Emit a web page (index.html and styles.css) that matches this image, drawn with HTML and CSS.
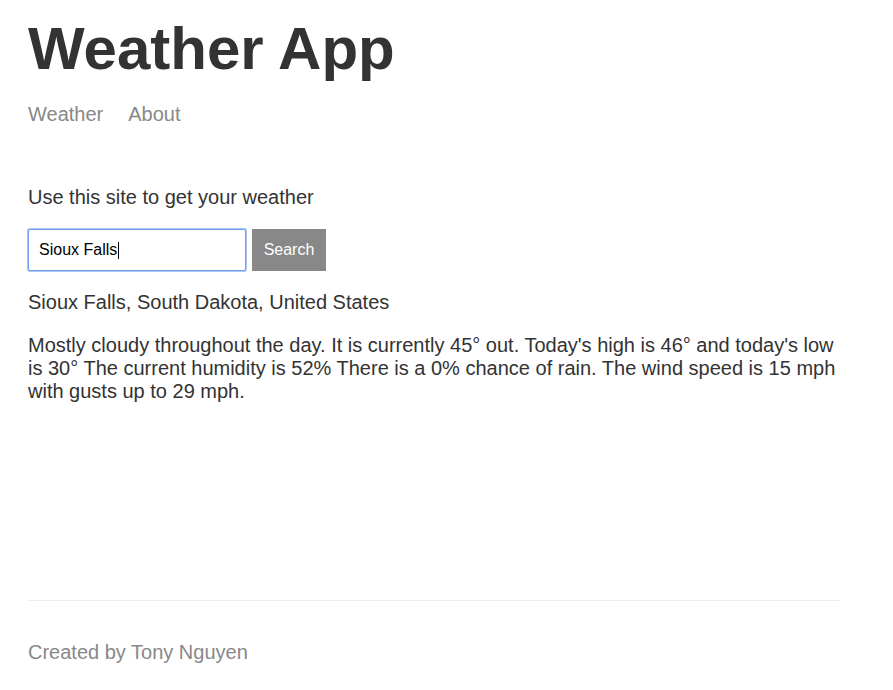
FILE: index.html
```html
<!DOCTYPE html>
<html lang="en">
<head>
<meta charset="utf-8">
<title>Weather</title>
<link rel="stylesheet" href="styles.css">
</head>
<body>
<div class="main-content">
  <header class="header">
    <h1 class="title">Weather App</h1>
    <nav class="nav">
      <a class="nav-link" href="#">Weather</a>
      <a class="nav-link" href="#">About</a>
    </nav>
  </header>
  <p class="intro">Use this site to get your weather</p>
  <form class="search-form">
    <span class="input-wrap">
      <input class="search-input" type="text" value="Sioux Falls" placeholder="Location">
      <span class="caret"></span>
    </span>
    <button class="search-button" type="button">Search</button>
  </form>
  <p class="location">Sioux Falls, South Dakota, United States</p>
  <p class="forecast">Mostly cloudy throughout the day. It is currently 45° out. Today's high is 46° and today's low is 30° The current humidity is 52% There is a 0% chance of rain. The wind speed is 15 mph with gusts up to 29 mph.</p>
</div>
<footer class="footer">
  <p class="footer-text">Created by Tony Nguyen</p>
</footer>
</body>
</html>
```
FILE: styles.css
```css
html, body {
  margin: 0;
  padding: 0;
}
body {
  color: #333333;
  font-family: "Liberation Sans", Arial, sans-serif;
  font-size: 20px;
  width: 812px;
  padding-left: 28px;
  min-height: 704px;
  display: flex;
  flex-direction: column;
  background: #ffffff;
}
.main-content {
  flex-grow: 1;
}
.header {
  margin-bottom: 60px;
}
.title {
  font-size: 60px;
  font-weight: bold;
  margin: 15px 0 0;
  line-height: 67px;
}
.nav {
  display: flex;
  gap: 25px;
  margin-top: 21px;
  line-height: 23px;
}
.nav-link {
  color: #888888;
  text-decoration: none;
}
.intro {
  margin: 0 0 20px;
  line-height: 23px;
}
.search-form {
  display: flex;
  gap: 6px;
  margin: 0;
}
.input-wrap {
  position: relative;
  display: block;
}
.search-input {
  display: block;
  box-sizing: border-box;
  width: 218px;
  height: 42px;
  border: 1px solid #6f9fea;
  box-shadow: 0 0 0 1px #a9c8f5;
  border-radius: 2px;
  padding: 0 10px;
  font-family: "Liberation Sans", Arial, sans-serif;
  font-size: 16px;
  color: #000000;
  outline: none;
}
.caret {
  position: absolute;
  left: 90px;
  top: 13px;
  width: 1px;
  height: 17px;
  background: #000000;
}
.search-button {
  box-sizing: border-box;
  width: 74px;
  height: 42px;
  border: 1px solid #888888;
  background: #888888;
  color: #ffffff;
  font-family: "Liberation Sans", Arial, sans-serif;
  font-size: 16px;
  padding: 0;
}
.location {
  margin: 20px 0;
  line-height: 23px;
}
.forecast {
  margin: 20px 0;
  line-height: 23px;
}
.footer {
  color: #888888;
  border-top: 1px solid #eeeeee;
  padding: 20px 0;
}
.footer-text {
  margin: 20px 0;
  line-height: 23px;
}
```
